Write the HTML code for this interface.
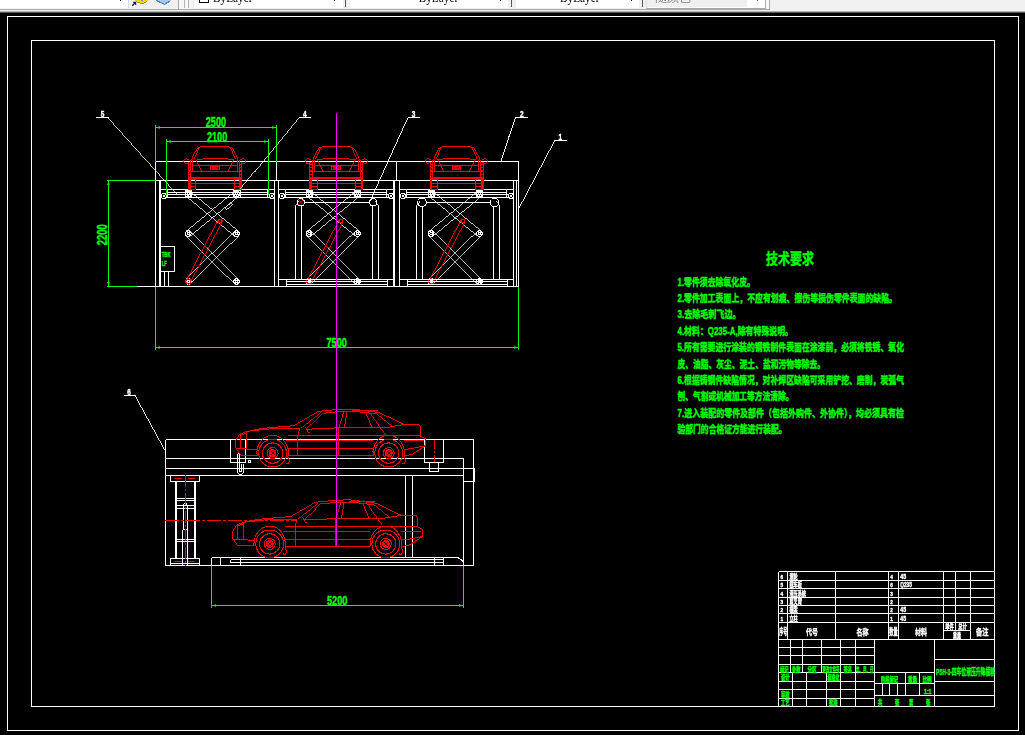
<!DOCTYPE html>
<html lang="zh"><head><meta charset="utf-8"><title>CAD</title>
<style>
html,body{margin:0;padding:0;background:#000;}
body{width:1025px;height:735px;position:relative;overflow:hidden;font-family:"Liberation Sans","Noto Sans CJK SC",sans-serif}
svg{position:absolute;left:0;top:0}
svg{stroke-width:1;shape-rendering:crispEdges;font-family:"Liberation Sans","Noto Sans CJK SC",sans-serif}
svg text{white-space:pre}
.aa{shape-rendering:geometricPrecision}
.w{filter:grayscale(1)}
</style></head>
<body>
<svg width="1025" height="735" viewBox="0 0 1025 735">
<rect x="0" y="0" width="1025" height="735" fill="#000" stroke="none"/>
<rect x="7.5" y="16.5" width="1011" height="714" stroke="#fff" fill="none"/>
<rect x="31.5" y="40.5" width="963" height="666" stroke="#fff" fill="none"/>
<line x1="155.5" y1="161.5" x2="518.5" y2="161.5" stroke="#fff"/>
<line x1="155.5" y1="180.5" x2="518.5" y2="180.5" stroke="#fff"/>
<line x1="155.5" y1="161.5" x2="155.5" y2="286.5" stroke="#fff"/>
<line x1="518.5" y1="161.5" x2="518.5" y2="286.5" stroke="#fff"/>
<line x1="137" y1="286.5" x2="518.5" y2="286.5" stroke="#fff"/>
<line x1="159.5" y1="180.5" x2="159.5" y2="286.5" stroke="#fff"/>
<line x1="160.5" y1="180.5" x2="160.5" y2="286.5" stroke="#fff"/>
<line x1="513.5" y1="180.5" x2="513.5" y2="286.5" stroke="#fff"/>
<line x1="516.5" y1="180.5" x2="516.5" y2="286.5" stroke="#fff"/>
<line x1="276.5" y1="161.5" x2="276.5" y2="180.5" stroke="#fff"/>
<line x1="396.5" y1="161.5" x2="396.5" y2="180.5" stroke="#fff"/>
<line x1="274.5" y1="180.5" x2="274.5" y2="286.5" stroke="#fff"/>
<line x1="278.5" y1="180.5" x2="278.5" y2="286.5" stroke="#fff"/>
<line x1="393.5" y1="180.5" x2="393.5" y2="286.5" stroke="#fff"/>
<line x1="394.5" y1="180.5" x2="394.5" y2="286.5" stroke="#fff"/>
<line x1="399.5" y1="180.5" x2="399.5" y2="286.5" stroke="#fff"/>
<line x1="160.5" y1="189.5" x2="274.5" y2="189.5" stroke="#fff"/>
<line x1="164.5" y1="197.5" x2="270.5" y2="197.5" stroke="#fff"/>
<line x1="167.5" y1="192.5" x2="267.5" y2="192.5" stroke="#fff"/>
<line x1="165.5" y1="194.5" x2="269.5" y2="194.5" stroke="#fff"/>
<circle cx="163.7" cy="196" r="2.5" stroke="#fff" fill="none"/>
<circle cx="163.7" cy="196" r="0.8" stroke="#fff" fill="none"/>
<circle cx="271.7" cy="196" r="2.5" stroke="#fff" fill="none"/>
<circle cx="271.7" cy="196" r="0.8" stroke="#fff" fill="none"/>
<line x1="167.5" y1="189.5" x2="167.5" y2="197.5" stroke="#fff"/>
<line x1="267.5" y1="189.5" x2="267.5" y2="197.5" stroke="#fff"/>
<line x1="278.5" y1="189.5" x2="393.5" y2="189.5" stroke="#fff"/>
<line x1="282.5" y1="197.5" x2="389.5" y2="197.5" stroke="#fff"/>
<line x1="285.5" y1="192.5" x2="386.5" y2="192.5" stroke="#fff"/>
<line x1="283.5" y1="194.5" x2="388.5" y2="194.5" stroke="#fff"/>
<circle cx="281.7" cy="196" r="2.5" stroke="#fff" fill="none"/>
<circle cx="281.7" cy="196" r="0.8" stroke="#fff" fill="none"/>
<circle cx="390.7" cy="196" r="2.5" stroke="#fff" fill="none"/>
<circle cx="390.7" cy="196" r="0.8" stroke="#fff" fill="none"/>
<line x1="285.5" y1="189.5" x2="285.5" y2="197.5" stroke="#fff"/>
<line x1="386.5" y1="189.5" x2="386.5" y2="197.5" stroke="#fff"/>
<line x1="399.5" y1="189.5" x2="513.5" y2="189.5" stroke="#fff"/>
<line x1="403.5" y1="197.5" x2="509.5" y2="197.5" stroke="#fff"/>
<line x1="406.5" y1="192.5" x2="506.5" y2="192.5" stroke="#fff"/>
<line x1="404.5" y1="194.5" x2="508.5" y2="194.5" stroke="#fff"/>
<circle cx="402.7" cy="196" r="2.5" stroke="#fff" fill="none"/>
<circle cx="402.7" cy="196" r="0.8" stroke="#fff" fill="none"/>
<circle cx="510.7" cy="196" r="2.5" stroke="#fff" fill="none"/>
<circle cx="510.7" cy="196" r="0.8" stroke="#fff" fill="none"/>
<line x1="406.5" y1="189.5" x2="406.5" y2="197.5" stroke="#fff"/>
<line x1="506.5" y1="189.5" x2="506.5" y2="197.5" stroke="#fff"/>
<line x1="186.3" y1="196.43" x2="234.5" y2="236.03" stroke="#fff" stroke-width="0.77"/>
<line x1="190.3" y1="191.57" x2="238.5" y2="231.17" stroke="#fff" stroke-width="0.77"/>
<line x1="234.5" y1="191.57" x2="186.3" y2="231.17" stroke="#fff" stroke-width="0.77"/>
<line x1="238.5" y1="196.43" x2="190.3" y2="236.03" stroke="#fff" stroke-width="0.77"/>
<line x1="186.08" y1="235.83" x2="234.28" y2="283.73" stroke="#fff" stroke-width="0.71"/>
<line x1="190.52" y1="231.37" x2="238.72" y2="279.27" stroke="#fff" stroke-width="0.71"/>
<line x1="234.28" y1="231.37" x2="186.08" y2="279.27" stroke="#fff" stroke-width="0.71"/>
<line x1="238.72" y1="235.83" x2="190.52" y2="283.73" stroke="#fff" stroke-width="0.71"/>
<circle cx="188.3" cy="194" r="2.8" stroke="#fff" fill="none"/>
<circle cx="188.3" cy="194" r="1.3" stroke="#fff" fill="none"/>
<circle cx="188.3" cy="233.6" r="2.8" stroke="#fff" fill="none"/>
<circle cx="188.3" cy="233.6" r="1.3" stroke="#fff" fill="none"/>
<circle cx="188.3" cy="281.5" r="2.8" stroke="#fff" fill="none"/>
<circle cx="188.3" cy="281.5" r="1.3" stroke="#fff" fill="none"/>
<circle cx="236.5" cy="194" r="2.8" stroke="#fff" fill="none"/>
<circle cx="236.5" cy="194" r="1.3" stroke="#fff" fill="none"/>
<circle cx="236.5" cy="233.6" r="2.8" stroke="#fff" fill="none"/>
<circle cx="236.5" cy="233.6" r="1.3" stroke="#fff" fill="none"/>
<circle cx="236.5" cy="281.5" r="2.8" stroke="#fff" fill="none"/>
<circle cx="236.5" cy="281.5" r="1.3" stroke="#fff" fill="none"/>
<rect x="185.3" y="190.5" width="6.5" height="7" stroke="#fff" fill="none"/>
<rect x="233.5" y="190.5" width="6.5" height="7" stroke="#fff" fill="none"/>
<line x1="224.9" y1="208" x2="230.9" y2="203" stroke="#fff" stroke-width="0.77"/>
<line x1="230.9" y1="203" x2="232.4" y2="204.8" stroke="#fff" stroke-width="0.77"/>
<line x1="232.4" y1="204.8" x2="226.4" y2="209.8" stroke="#fff" stroke-width="0.77"/>
<line x1="226.4" y1="209.8" x2="224.9" y2="208" stroke="#fff" stroke-width="0.77"/>
<line x1="218.15" y1="219.98" x2="186.35" y2="280.48" stroke="#f00" stroke-width="0.89"/>
<line x1="222.05" y1="222.02" x2="190.25" y2="282.52" stroke="#f00" stroke-width="0.89"/>
<circle cx="220.1" cy="221" r="2" stroke="#f00" fill="none"/>
<circle cx="188.3" cy="281.5" r="2.6" stroke="#f00" fill="none"/>
<line x1="204.48" y1="245.99" x2="208.37" y2="248.04" stroke="#f00" stroke-width="0.89"/>
<line x1="307.2" y1="196.43" x2="355.4" y2="236.03" stroke="#fff" stroke-width="0.77"/>
<line x1="311.2" y1="191.57" x2="359.4" y2="231.17" stroke="#fff" stroke-width="0.77"/>
<line x1="355.4" y1="191.57" x2="307.2" y2="231.17" stroke="#fff" stroke-width="0.77"/>
<line x1="359.4" y1="196.43" x2="311.2" y2="236.03" stroke="#fff" stroke-width="0.77"/>
<line x1="306.98" y1="235.83" x2="355.18" y2="283.73" stroke="#fff" stroke-width="0.71"/>
<line x1="311.42" y1="231.37" x2="359.62" y2="279.27" stroke="#fff" stroke-width="0.71"/>
<line x1="355.18" y1="231.37" x2="306.98" y2="279.27" stroke="#fff" stroke-width="0.71"/>
<line x1="359.62" y1="235.83" x2="311.42" y2="283.73" stroke="#fff" stroke-width="0.71"/>
<circle cx="309.2" cy="194" r="2.8" stroke="#fff" fill="none"/>
<circle cx="309.2" cy="194" r="1.3" stroke="#fff" fill="none"/>
<circle cx="309.2" cy="233.6" r="2.8" stroke="#fff" fill="none"/>
<circle cx="309.2" cy="233.6" r="1.3" stroke="#fff" fill="none"/>
<circle cx="309.2" cy="281.5" r="2.8" stroke="#fff" fill="none"/>
<circle cx="309.2" cy="281.5" r="1.3" stroke="#fff" fill="none"/>
<circle cx="357.4" cy="194" r="2.8" stroke="#fff" fill="none"/>
<circle cx="357.4" cy="194" r="1.3" stroke="#fff" fill="none"/>
<circle cx="357.4" cy="233.6" r="2.8" stroke="#fff" fill="none"/>
<circle cx="357.4" cy="233.6" r="1.3" stroke="#fff" fill="none"/>
<circle cx="357.4" cy="281.5" r="2.8" stroke="#fff" fill="none"/>
<circle cx="357.4" cy="281.5" r="1.3" stroke="#fff" fill="none"/>
<rect x="306.2" y="190.5" width="6.5" height="7" stroke="#fff" fill="none"/>
<rect x="354.4" y="190.5" width="6.5" height="7" stroke="#fff" fill="none"/>
<line x1="339.05" y1="219.98" x2="307.25" y2="280.48" stroke="#f00" stroke-width="0.89"/>
<line x1="342.95" y1="222.02" x2="311.15" y2="282.52" stroke="#f00" stroke-width="0.89"/>
<circle cx="341" cy="221" r="2" stroke="#f00" fill="none"/>
<circle cx="309.2" cy="281.5" r="2.6" stroke="#f00" fill="none"/>
<line x1="325.38" y1="245.99" x2="329.27" y2="248.04" stroke="#f00" stroke-width="0.89"/>
<line x1="429.2" y1="196.43" x2="477.4" y2="236.03" stroke="#fff" stroke-width="0.77"/>
<line x1="433.2" y1="191.57" x2="481.4" y2="231.17" stroke="#fff" stroke-width="0.77"/>
<line x1="477.4" y1="191.57" x2="429.2" y2="231.17" stroke="#fff" stroke-width="0.77"/>
<line x1="481.4" y1="196.43" x2="433.2" y2="236.03" stroke="#fff" stroke-width="0.77"/>
<line x1="428.98" y1="235.83" x2="477.18" y2="283.73" stroke="#fff" stroke-width="0.71"/>
<line x1="433.42" y1="231.37" x2="481.62" y2="279.27" stroke="#fff" stroke-width="0.71"/>
<line x1="477.18" y1="231.37" x2="428.98" y2="279.27" stroke="#fff" stroke-width="0.71"/>
<line x1="481.62" y1="235.83" x2="433.42" y2="283.73" stroke="#fff" stroke-width="0.71"/>
<circle cx="431.2" cy="194" r="2.8" stroke="#fff" fill="none"/>
<circle cx="431.2" cy="194" r="1.3" stroke="#fff" fill="none"/>
<circle cx="431.2" cy="233.6" r="2.8" stroke="#fff" fill="none"/>
<circle cx="431.2" cy="233.6" r="1.3" stroke="#fff" fill="none"/>
<circle cx="431.2" cy="281.5" r="2.8" stroke="#fff" fill="none"/>
<circle cx="431.2" cy="281.5" r="1.3" stroke="#fff" fill="none"/>
<circle cx="479.4" cy="194" r="2.8" stroke="#fff" fill="none"/>
<circle cx="479.4" cy="194" r="1.3" stroke="#fff" fill="none"/>
<circle cx="479.4" cy="233.6" r="2.8" stroke="#fff" fill="none"/>
<circle cx="479.4" cy="233.6" r="1.3" stroke="#fff" fill="none"/>
<circle cx="479.4" cy="281.5" r="2.8" stroke="#fff" fill="none"/>
<circle cx="479.4" cy="281.5" r="1.3" stroke="#fff" fill="none"/>
<rect x="428.2" y="190.5" width="6.5" height="7" stroke="#fff" fill="none"/>
<rect x="476.4" y="190.5" width="6.5" height="7" stroke="#fff" fill="none"/>
<line x1="461.05" y1="219.98" x2="429.25" y2="280.48" stroke="#f00" stroke-width="0.89"/>
<line x1="464.95" y1="222.02" x2="433.15" y2="282.52" stroke="#f00" stroke-width="0.89"/>
<circle cx="463" cy="221" r="2" stroke="#f00" fill="none"/>
<circle cx="431.2" cy="281.5" r="2.6" stroke="#f00" fill="none"/>
<line x1="447.38" y1="245.99" x2="451.27" y2="248.04" stroke="#f00" stroke-width="0.89"/>
<line x1="295.4" y1="279.5" x2="295.4" y2="206" stroke="#fff"/>
<line x1="295.4" y1="206" x2="298.9" y2="201" stroke="#fff" stroke-width="0.82"/>
<line x1="378.6" y1="279.5" x2="378.6" y2="206" stroke="#fff"/>
<line x1="378.6" y1="206" x2="375.1" y2="201" stroke="#fff" stroke-width="0.82"/>
<line x1="301.6" y1="206" x2="301.6" y2="279.5" stroke="#fff"/>
<line x1="372.4" y1="206" x2="372.4" y2="279.5" stroke="#fff"/>
<line x1="304.6" y1="202.5" x2="369.4" y2="202.5" stroke="#fff"/>
<circle cx="300.8" cy="202.3" r="3.6" stroke="#fff" fill="none"/>
<circle cx="373.2" cy="202.3" r="3.6" stroke="#fff" fill="none"/>
<line x1="297.8" y1="199.3" x2="303.8" y2="205.3" stroke="#f00" stroke-width="0.71"/>
<line x1="297.8" y1="205.3" x2="303.8" y2="199.3" stroke="#f00" stroke-width="0.71"/>
<line x1="416.6" y1="279.5" x2="416.6" y2="206" stroke="#fff"/>
<line x1="416.6" y1="206" x2="420.1" y2="201" stroke="#fff" stroke-width="0.82"/>
<line x1="499.8" y1="279.5" x2="499.8" y2="206" stroke="#fff"/>
<line x1="499.8" y1="206" x2="496.3" y2="201" stroke="#fff" stroke-width="0.82"/>
<line x1="422.8" y1="206" x2="422.8" y2="279.5" stroke="#fff"/>
<line x1="493.6" y1="206" x2="493.6" y2="279.5" stroke="#fff"/>
<line x1="425.8" y1="202.5" x2="490.6" y2="202.5" stroke="#fff"/>
<circle cx="422" cy="202.3" r="4.3" stroke="#fff" fill="none"/>
<circle cx="494.4" cy="202.3" r="4.3" stroke="#fff" fill="none"/>
<line x1="278.5" y1="279.5" x2="393.5" y2="279.5" stroke="#fff"/>
<line x1="286.5" y1="281.5" x2="387.5" y2="281.5" stroke="#fff"/>
<line x1="286.5" y1="284.5" x2="387.5" y2="284.5" stroke="#fff"/>
<line x1="286.5" y1="279.5" x2="286.5" y2="286.5" stroke="#fff"/>
<line x1="387.5" y1="279.5" x2="387.5" y2="286.5" stroke="#fff"/>
<line x1="399.5" y1="279.5" x2="513.5" y2="279.5" stroke="#fff"/>
<line x1="407.5" y1="281.5" x2="507.5" y2="281.5" stroke="#fff"/>
<line x1="407.5" y1="284.5" x2="507.5" y2="284.5" stroke="#fff"/>
<line x1="407.5" y1="279.5" x2="407.5" y2="286.5" stroke="#fff"/>
<line x1="507.5" y1="279.5" x2="507.5" y2="286.5" stroke="#fff"/>
<rect x="160.5" y="246.5" width="14" height="25" stroke="#fff" fill="none"/>
<line x1="164.5" y1="271.5" x2="164.5" y2="286.5" stroke="#fff"/>
<line x1="168.5" y1="271.5" x2="168.5" y2="286.5" stroke="#fff"/>
<text x="161.8" y="256.6" font-size="6.5" fill="#0f0" text-anchor="start" font-weight="bold" textLength="8.6" lengthAdjust="spacingAndGlyphs" style='stroke:#0f0;stroke-width:0.4;'>TBK</text>
<text x="161.8" y="265.6" font-size="6.5" fill="#0f0" text-anchor="start" font-weight="bold" textLength="5" lengthAdjust="spacingAndGlyphs" style='stroke:#0f0;stroke-width:0.4;'>LF</text>
<line x1="201.3" y1="146.5" x2="228.3" y2="146.5" stroke="#f00"/>
<line x1="228.3" y1="146.5" x2="232.3" y2="148.2" stroke="#f00" stroke-width="0.92"/>
<line x1="232.3" y1="148.2" x2="237.4" y2="157.5" stroke="#f00" stroke-width="0.88"/>
<line x1="237.4" y1="157.5" x2="239" y2="160.4" stroke="#f00" stroke-width="0.88"/>
<line x1="201.3" y1="146.5" x2="197.3" y2="148.2" stroke="#f00" stroke-width="0.92"/>
<line x1="197.3" y1="148.2" x2="192.2" y2="157.5" stroke="#f00" stroke-width="0.88"/>
<line x1="192.2" y1="157.5" x2="190.6" y2="160.4" stroke="#f00" stroke-width="0.88"/>
<line x1="230.6" y1="148.2" x2="235.2" y2="158.6" stroke="#f00" stroke-width="0.91"/>
<line x1="199" y1="148.2" x2="194.4" y2="158.6" stroke="#f00" stroke-width="0.91"/>
<line x1="195.5" y1="160" x2="204.8" y2="158.5" stroke="#f00" stroke-width="0.99"/>
<line x1="204.8" y1="158.5" x2="224.8" y2="158.5" stroke="#f00"/>
<line x1="224.8" y1="158.5" x2="234.1" y2="160" stroke="#f00" stroke-width="0.99"/>
<line x1="241.3" y1="161.5" x2="241.3" y2="189.5" stroke="#f00"/>
<line x1="188.3" y1="161.5" x2="188.3" y2="189.5" stroke="#f00"/>
<line x1="239" y1="160.4" x2="239" y2="178" stroke="#f00"/>
<line x1="190.6" y1="160.4" x2="190.6" y2="178" stroke="#f00"/>
<line x1="237" y1="160.4" x2="237" y2="172" stroke="#f00"/>
<line x1="192.6" y1="160.4" x2="192.6" y2="172" stroke="#f00"/>
<line x1="240.3" y1="160" x2="243.3" y2="158.5" stroke="#f00" stroke-width="0.89"/>
<line x1="243.3" y1="158.5" x2="246.3" y2="161" stroke="#f00" stroke-width="0.77"/>
<line x1="246.3" y1="161" x2="244.1" y2="163.6" stroke="#f00" stroke-width="0.76"/>
<line x1="244.1" y1="163.6" x2="240.6" y2="162.6" stroke="#f00" stroke-width="0.96"/>
<line x1="189.3" y1="160" x2="186.3" y2="158.5" stroke="#f00" stroke-width="0.89"/>
<line x1="186.3" y1="158.5" x2="183.3" y2="161" stroke="#f00" stroke-width="0.77"/>
<line x1="183.3" y1="161" x2="185.5" y2="163.6" stroke="#f00" stroke-width="0.76"/>
<line x1="185.5" y1="163.6" x2="189" y2="162.6" stroke="#f00" stroke-width="0.96"/>
<line x1="233.2" y1="160.4" x2="227.6" y2="171.5" stroke="#f00" stroke-width="0.89"/>
<line x1="196.4" y1="160.4" x2="202" y2="171.5" stroke="#f00" stroke-width="0.89"/>
<line x1="192.6" y1="165.5" x2="237" y2="165.5" stroke="#f00"/>
<line x1="188.3" y1="171.5" x2="241.3" y2="171.5" stroke="#f00"/>
<rect x="188.8" y="176.5" width="52" height="2.6" fill="#f00" stroke="none"/>
<line x1="195.5" y1="183.5" x2="234.1" y2="183.5" stroke="#f00"/>
<rect x="188.3" y="179" width="7.2" height="10.5" stroke="#f00" fill="none"/>
<line x1="188.3" y1="183.5" x2="195.5" y2="183.5" stroke="#f00"/>
<line x1="188.3" y1="186.5" x2="195.5" y2="186.5" stroke="#f00"/>
<line x1="188.3" y1="164.5" x2="190.6" y2="164.5" stroke="#f00"/>
<line x1="188.3" y1="167.5" x2="190.6" y2="167.5" stroke="#f00"/>
<line x1="188.3" y1="170.5" x2="190.6" y2="170.5" stroke="#f00"/>
<line x1="188.3" y1="174.5" x2="190.6" y2="174.5" stroke="#f00"/>
<rect x="188.3" y="178" width="2.3" height="11.5" fill="#f00" stroke="none"/>
<rect x="234.1" y="179" width="7.2" height="10.5" stroke="#f00" fill="none"/>
<line x1="234.1" y1="183.5" x2="241.3" y2="183.5" stroke="#f00"/>
<line x1="234.1" y1="186.5" x2="241.3" y2="186.5" stroke="#f00"/>
<line x1="239" y1="164.5" x2="241.3" y2="164.5" stroke="#f00"/>
<line x1="239" y1="167.5" x2="241.3" y2="167.5" stroke="#f00"/>
<line x1="239" y1="170.5" x2="241.3" y2="170.5" stroke="#f00"/>
<line x1="239" y1="174.5" x2="241.3" y2="174.5" stroke="#f00"/>
<rect x="239" y="178" width="2.3" height="11.5" fill="#f00" stroke="none"/>
<rect x="210.3" y="166" width="8.7" height="3.6" stroke="#f00" fill="none"/>
<text x="211.4" y="169.2" font-size="3.4" fill="#f00" text-anchor="start" font-weight="bold" textLength="6.4" lengthAdjust="spacingAndGlyphs" style='stroke:#f00;stroke-width:0.4;'>NO</text>
<line x1="322.8" y1="146.5" x2="349.8" y2="146.5" stroke="#f00"/>
<line x1="349.8" y1="146.5" x2="353.8" y2="148.2" stroke="#f00" stroke-width="0.92"/>
<line x1="353.8" y1="148.2" x2="358.9" y2="157.5" stroke="#f00" stroke-width="0.88"/>
<line x1="358.9" y1="157.5" x2="360.5" y2="160.4" stroke="#f00" stroke-width="0.88"/>
<line x1="322.8" y1="146.5" x2="318.8" y2="148.2" stroke="#f00" stroke-width="0.92"/>
<line x1="318.8" y1="148.2" x2="313.7" y2="157.5" stroke="#f00" stroke-width="0.88"/>
<line x1="313.7" y1="157.5" x2="312.1" y2="160.4" stroke="#f00" stroke-width="0.88"/>
<line x1="352.1" y1="148.2" x2="356.7" y2="158.6" stroke="#f00" stroke-width="0.91"/>
<line x1="320.5" y1="148.2" x2="315.9" y2="158.6" stroke="#f00" stroke-width="0.91"/>
<line x1="317" y1="160" x2="326.3" y2="158.5" stroke="#f00" stroke-width="0.99"/>
<line x1="326.3" y1="158.5" x2="346.3" y2="158.5" stroke="#f00"/>
<line x1="346.3" y1="158.5" x2="355.6" y2="160" stroke="#f00" stroke-width="0.99"/>
<line x1="362.8" y1="161.5" x2="362.8" y2="189.5" stroke="#f00"/>
<line x1="309.8" y1="161.5" x2="309.8" y2="189.5" stroke="#f00"/>
<line x1="360.5" y1="160.4" x2="360.5" y2="178" stroke="#f00"/>
<line x1="312.1" y1="160.4" x2="312.1" y2="178" stroke="#f00"/>
<line x1="358.5" y1="160.4" x2="358.5" y2="172" stroke="#f00"/>
<line x1="314.1" y1="160.4" x2="314.1" y2="172" stroke="#f00"/>
<line x1="361.8" y1="160" x2="364.8" y2="158.5" stroke="#f00" stroke-width="0.89"/>
<line x1="364.8" y1="158.5" x2="367.8" y2="161" stroke="#f00" stroke-width="0.77"/>
<line x1="367.8" y1="161" x2="365.6" y2="163.6" stroke="#f00" stroke-width="0.76"/>
<line x1="365.6" y1="163.6" x2="362.1" y2="162.6" stroke="#f00" stroke-width="0.96"/>
<line x1="310.8" y1="160" x2="307.8" y2="158.5" stroke="#f00" stroke-width="0.89"/>
<line x1="307.8" y1="158.5" x2="304.8" y2="161" stroke="#f00" stroke-width="0.77"/>
<line x1="304.8" y1="161" x2="307" y2="163.6" stroke="#f00" stroke-width="0.76"/>
<line x1="307" y1="163.6" x2="310.5" y2="162.6" stroke="#f00" stroke-width="0.96"/>
<line x1="354.7" y1="160.4" x2="349.1" y2="171.5" stroke="#f00" stroke-width="0.89"/>
<line x1="317.9" y1="160.4" x2="323.5" y2="171.5" stroke="#f00" stroke-width="0.89"/>
<line x1="314.1" y1="165.5" x2="358.5" y2="165.5" stroke="#f00"/>
<line x1="309.8" y1="171.5" x2="362.8" y2="171.5" stroke="#f00"/>
<rect x="310.3" y="176.5" width="52" height="2.6" fill="#f00" stroke="none"/>
<line x1="317" y1="183.5" x2="355.6" y2="183.5" stroke="#f00"/>
<rect x="309.8" y="179" width="7.2" height="10.5" stroke="#f00" fill="none"/>
<line x1="309.8" y1="183.5" x2="317" y2="183.5" stroke="#f00"/>
<line x1="309.8" y1="186.5" x2="317" y2="186.5" stroke="#f00"/>
<line x1="309.8" y1="164.5" x2="312.1" y2="164.5" stroke="#f00"/>
<line x1="309.8" y1="167.5" x2="312.1" y2="167.5" stroke="#f00"/>
<line x1="309.8" y1="170.5" x2="312.1" y2="170.5" stroke="#f00"/>
<line x1="309.8" y1="174.5" x2="312.1" y2="174.5" stroke="#f00"/>
<rect x="309.8" y="178" width="2.3" height="11.5" fill="#f00" stroke="none"/>
<rect x="355.6" y="179" width="7.2" height="10.5" stroke="#f00" fill="none"/>
<line x1="355.6" y1="183.5" x2="362.8" y2="183.5" stroke="#f00"/>
<line x1="355.6" y1="186.5" x2="362.8" y2="186.5" stroke="#f00"/>
<line x1="360.5" y1="164.5" x2="362.8" y2="164.5" stroke="#f00"/>
<line x1="360.5" y1="167.5" x2="362.8" y2="167.5" stroke="#f00"/>
<line x1="360.5" y1="170.5" x2="362.8" y2="170.5" stroke="#f00"/>
<line x1="360.5" y1="174.5" x2="362.8" y2="174.5" stroke="#f00"/>
<rect x="360.5" y="178" width="2.3" height="11.5" fill="#f00" stroke="none"/>
<rect x="331.8" y="166" width="8.7" height="3.6" stroke="#f00" fill="none"/>
<text x="332.9" y="169.2" font-size="3.4" fill="#f00" text-anchor="start" font-weight="bold" textLength="6.4" lengthAdjust="spacingAndGlyphs" style='stroke:#f00;stroke-width:0.4;'>NO</text>
<line x1="443.1" y1="146.5" x2="470.1" y2="146.5" stroke="#f00"/>
<line x1="470.1" y1="146.5" x2="474.1" y2="148.2" stroke="#f00" stroke-width="0.92"/>
<line x1="474.1" y1="148.2" x2="479.2" y2="157.5" stroke="#f00" stroke-width="0.88"/>
<line x1="479.2" y1="157.5" x2="480.8" y2="160.4" stroke="#f00" stroke-width="0.88"/>
<line x1="443.1" y1="146.5" x2="439.1" y2="148.2" stroke="#f00" stroke-width="0.92"/>
<line x1="439.1" y1="148.2" x2="434" y2="157.5" stroke="#f00" stroke-width="0.88"/>
<line x1="434" y1="157.5" x2="432.4" y2="160.4" stroke="#f00" stroke-width="0.88"/>
<line x1="472.4" y1="148.2" x2="477" y2="158.6" stroke="#f00" stroke-width="0.91"/>
<line x1="440.8" y1="148.2" x2="436.2" y2="158.6" stroke="#f00" stroke-width="0.91"/>
<line x1="437.3" y1="160" x2="446.6" y2="158.5" stroke="#f00" stroke-width="0.99"/>
<line x1="446.6" y1="158.5" x2="466.6" y2="158.5" stroke="#f00"/>
<line x1="466.6" y1="158.5" x2="475.9" y2="160" stroke="#f00" stroke-width="0.99"/>
<line x1="483.1" y1="161.5" x2="483.1" y2="189.5" stroke="#f00"/>
<line x1="430.1" y1="161.5" x2="430.1" y2="189.5" stroke="#f00"/>
<line x1="480.8" y1="160.4" x2="480.8" y2="178" stroke="#f00"/>
<line x1="432.4" y1="160.4" x2="432.4" y2="178" stroke="#f00"/>
<line x1="478.8" y1="160.4" x2="478.8" y2="172" stroke="#f00"/>
<line x1="434.4" y1="160.4" x2="434.4" y2="172" stroke="#f00"/>
<line x1="482.1" y1="160" x2="485.1" y2="158.5" stroke="#f00" stroke-width="0.89"/>
<line x1="485.1" y1="158.5" x2="488.1" y2="161" stroke="#f00" stroke-width="0.77"/>
<line x1="488.1" y1="161" x2="485.9" y2="163.6" stroke="#f00" stroke-width="0.76"/>
<line x1="485.9" y1="163.6" x2="482.4" y2="162.6" stroke="#f00" stroke-width="0.96"/>
<line x1="431.1" y1="160" x2="428.1" y2="158.5" stroke="#f00" stroke-width="0.89"/>
<line x1="428.1" y1="158.5" x2="425.1" y2="161" stroke="#f00" stroke-width="0.77"/>
<line x1="425.1" y1="161" x2="427.3" y2="163.6" stroke="#f00" stroke-width="0.76"/>
<line x1="427.3" y1="163.6" x2="430.8" y2="162.6" stroke="#f00" stroke-width="0.96"/>
<line x1="475" y1="160.4" x2="469.4" y2="171.5" stroke="#f00" stroke-width="0.89"/>
<line x1="438.2" y1="160.4" x2="443.8" y2="171.5" stroke="#f00" stroke-width="0.89"/>
<line x1="434.4" y1="165.5" x2="478.8" y2="165.5" stroke="#f00"/>
<line x1="430.1" y1="171.5" x2="483.1" y2="171.5" stroke="#f00"/>
<rect x="430.6" y="176.5" width="52" height="2.6" fill="#f00" stroke="none"/>
<line x1="437.3" y1="183.5" x2="475.9" y2="183.5" stroke="#f00"/>
<rect x="430.1" y="179" width="7.2" height="10.5" stroke="#f00" fill="none"/>
<line x1="430.1" y1="183.5" x2="437.3" y2="183.5" stroke="#f00"/>
<line x1="430.1" y1="186.5" x2="437.3" y2="186.5" stroke="#f00"/>
<line x1="430.1" y1="164.5" x2="432.4" y2="164.5" stroke="#f00"/>
<line x1="430.1" y1="167.5" x2="432.4" y2="167.5" stroke="#f00"/>
<line x1="430.1" y1="170.5" x2="432.4" y2="170.5" stroke="#f00"/>
<line x1="430.1" y1="174.5" x2="432.4" y2="174.5" stroke="#f00"/>
<rect x="430.1" y="178" width="2.3" height="11.5" fill="#f00" stroke="none"/>
<rect x="475.9" y="179" width="7.2" height="10.5" stroke="#f00" fill="none"/>
<line x1="475.9" y1="183.5" x2="483.1" y2="183.5" stroke="#f00"/>
<line x1="475.9" y1="186.5" x2="483.1" y2="186.5" stroke="#f00"/>
<line x1="480.8" y1="164.5" x2="483.1" y2="164.5" stroke="#f00"/>
<line x1="480.8" y1="167.5" x2="483.1" y2="167.5" stroke="#f00"/>
<line x1="480.8" y1="170.5" x2="483.1" y2="170.5" stroke="#f00"/>
<line x1="480.8" y1="174.5" x2="483.1" y2="174.5" stroke="#f00"/>
<rect x="480.8" y="178" width="2.3" height="11.5" fill="#f00" stroke="none"/>
<rect x="452.1" y="166" width="8.7" height="3.6" stroke="#f00" fill="none"/>
<text x="453.2" y="169.2" font-size="3.4" fill="#f00" text-anchor="start" font-weight="bold" textLength="6.4" lengthAdjust="spacingAndGlyphs" style='stroke:#f00;stroke-width:0.4;'>NO</text>
<line x1="155.5" y1="124.5" x2="155.5" y2="161.5" stroke="#0f0"/>
<line x1="276.5" y1="124.5" x2="276.5" y2="161.5" stroke="#0f0"/>
<line x1="155.5" y1="127.5" x2="276.5" y2="127.5" stroke="#0f0"/>
<polygon class="aa" points="155.5,127.5 160,126.2 160,128.8" fill="#0f0" stroke="none"/>
<polygon class="aa" points="276.5,127.5 272,126.2 272,128.8" fill="#0f0" stroke="none"/>
<line x1="166.5" y1="138.5" x2="166.5" y2="195" stroke="#0f0"/>
<line x1="268.5" y1="138.5" x2="268.5" y2="195" stroke="#0f0"/>
<line x1="166.5" y1="141.5" x2="268.5" y2="141.5" stroke="#0f0"/>
<polygon class="aa" points="166.5,141.5 171,140.2 171,142.8" fill="#0f0" stroke="none"/>
<polygon class="aa" points="268.5,141.5 264,140.2 264,142.8" fill="#0f0" stroke="none"/>
<line x1="155.5" y1="286.5" x2="155.5" y2="349.5" stroke="#0f0"/>
<line x1="518.5" y1="286.5" x2="518.5" y2="349.5" stroke="#0f0"/>
<line x1="155.5" y1="347.5" x2="518.5" y2="347.5" stroke="#0f0"/>
<polygon class="aa" points="155.5,347.5 160,346.2 160,348.8" fill="#0f0" stroke="none"/>
<polygon class="aa" points="518.5,347.5 514,346.2 514,348.8" fill="#0f0" stroke="none"/>
<line x1="106.5" y1="180.5" x2="155.5" y2="180.5" stroke="#0f0"/>
<line x1="106.5" y1="286.5" x2="137" y2="286.5" stroke="#0f0"/>
<line x1="108.5" y1="180.5" x2="108.5" y2="286.5" stroke="#0f0"/>
<polygon class="aa" points="108.5,180.5 107.2,185 109.8,185" fill="#0f0" stroke="none"/>
<polygon class="aa" points="108.5,286.5 107.2,282 109.8,282" fill="#0f0" stroke="none"/>
<text x="205.8" y="127" font-size="14" fill="#0f0" text-anchor="start" font-weight="bold" textLength="20.2" lengthAdjust="spacingAndGlyphs" style='font-family:"Liberation Sans", sans-serif;stroke:#0f0;stroke-width:0.4;'>2500</text>
<text x="207" y="142.4" font-size="14" fill="#0f0" text-anchor="start" font-weight="bold" textLength="20.2" lengthAdjust="spacingAndGlyphs" style='font-family:"Liberation Sans", sans-serif;stroke:#0f0;stroke-width:0.4;'>2100</text>
<text x="326.5" y="347" font-size="13" fill="#0f0" text-anchor="start" font-weight="bold" textLength="20.3" lengthAdjust="spacingAndGlyphs" style='font-family:"Liberation Sans", sans-serif;stroke:#0f0;stroke-width:0.4;'>7500</text>
<text x="0" y="0" font-size="14" fill="#0f0" text-anchor="start" font-weight="bold" textLength="21" lengthAdjust="spacingAndGlyphs" style='font-family:"Liberation Sans", sans-serif;stroke:#0f0;stroke-width:0.4;' transform="translate(107.2,245.2) rotate(-90)">2200</text>
<line x1="96" y1="117.5" x2="108.5" y2="117.5" stroke="#fff"/>
<line x1="108.5" y1="117.5" x2="178" y2="194.5" stroke="#fff" stroke-width="0.74"/>
<text x="102.5" y="116.7" font-size="8.5" fill="#fff" text-anchor="middle" font-weight="bold" textLength="3.6" lengthAdjust="spacingAndGlyphs" style='font-family:"Liberation Sans", sans-serif;stroke:#fff;stroke-width:0.4;' class="w">5</text>
<line x1="298.5" y1="117.5" x2="311" y2="117.5" stroke="#fff"/>
<line x1="298.5" y1="117.5" x2="240" y2="189" stroke="#fff" stroke-width="0.77"/>
<text x="304.7" y="116.7" font-size="8.5" fill="#fff" text-anchor="middle" font-weight="bold" textLength="3.6" lengthAdjust="spacingAndGlyphs" style='font-family:"Liberation Sans", sans-serif;stroke:#fff;stroke-width:0.4;' class="w">4</text>
<line x1="407.5" y1="117.5" x2="420" y2="117.5" stroke="#fff"/>
<line x1="407.5" y1="117.5" x2="371" y2="198" stroke="#fff" stroke-width="0.91"/>
<text x="413.5" y="116.7" font-size="8.5" fill="#fff" text-anchor="middle" font-weight="bold" textLength="3.6" lengthAdjust="spacingAndGlyphs" style='font-family:"Liberation Sans", sans-serif;stroke:#fff;stroke-width:0.4;' class="w">3</text>
<line x1="515" y1="117.5" x2="527.5" y2="117.5" stroke="#fff"/>
<line x1="515" y1="117.5" x2="501.2" y2="161" stroke="#fff" stroke-width="0.95"/>
<text x="521.7" y="116.7" font-size="8.5" fill="#fff" text-anchor="middle" font-weight="bold" textLength="3.6" lengthAdjust="spacingAndGlyphs" style='font-family:"Liberation Sans", sans-serif;stroke:#fff;stroke-width:0.4;' class="w">2</text>
<line x1="554.3" y1="140.5" x2="566.5" y2="140.5" stroke="#fff"/>
<line x1="554.3" y1="140.5" x2="518.5" y2="208" stroke="#fff" stroke-width="0.88"/>
<text x="560.4" y="139.7" font-size="8.5" fill="#fff" text-anchor="middle" font-weight="bold" textLength="3.6" lengthAdjust="spacingAndGlyphs" style='font-family:"Liberation Sans", sans-serif;stroke:#fff;stroke-width:0.4;' class="w">1</text>
<line x1="165.5" y1="439.5" x2="473.5" y2="439.5" stroke="#fff"/>
<line x1="165.5" y1="458.5" x2="463.5" y2="458.5" stroke="#fff"/>
<line x1="165.5" y1="468.5" x2="473.5" y2="468.5" stroke="#fff"/>
<line x1="165.5" y1="475.5" x2="463.5" y2="475.5" stroke="#fff"/>
<line x1="165.5" y1="439.5" x2="165.5" y2="565.5" stroke="#fff"/>
<line x1="473.5" y1="439.5" x2="473.5" y2="565.5" stroke="#fff"/>
<line x1="463.5" y1="458.5" x2="463.5" y2="565.5" stroke="#fff"/>
<line x1="165.5" y1="565.5" x2="211.5" y2="565.5" stroke="#fff"/>
<line x1="211.5" y1="565.5" x2="473.5" y2="565.5" stroke="#fff"/>
<rect x="463.5" y="468.5" width="10.5" height="13" stroke="#fff" fill="none"/>
<rect x="230.5" y="439.5" width="15" height="23" stroke="#fff" fill="none"/>
<path d="M237.5 453.5 V471 Q237.5 474.5 240.5 474.5 Q243.5 474.5 243.5 471 V464" stroke="#fff" fill="none"/>
<path d="M239.5 453.5 V470.5 Q239.7 472.5 241.5 471.5 V464" stroke="#fff" fill="none"/>
<line x1="237.5" y1="453.5" x2="239.5" y2="453.5" stroke="#fff"/>
<rect x="248.5" y="460.5" width="1.5" height="1.5" stroke="#fff" fill="none"/>
<rect x="424.5" y="439.5" width="19" height="23" stroke="#fff" fill="none"/>
<rect x="429.5" y="462.5" width="9" height="9" stroke="#fff" fill="none"/>
<line x1="434.5" y1="440" x2="434.5" y2="462" stroke="#f00" stroke-dasharray="9 2 2 2"/>
<rect x="170.5" y="475.5" width="29" height="6" stroke="#fff" fill="none"/>
<line x1="175" y1="478.5" x2="182" y2="478.5" stroke="#f00"/>
<line x1="188" y1="478.5" x2="195" y2="478.5" stroke="#f00"/>
<line x1="175.5" y1="481.5" x2="175.5" y2="558.5" stroke="#fff"/>
<line x1="195.5" y1="481.5" x2="195.5" y2="558.5" stroke="#fff"/>
<line x1="176.5" y1="481.5" x2="176.5" y2="558.5" stroke="#fff"/>
<line x1="194.5" y1="481.5" x2="194.5" y2="558.5" stroke="#fff"/>
<line x1="176.5" y1="498.5" x2="194.5" y2="498.5" stroke="#fff"/>
<line x1="176.5" y1="500.5" x2="194.5" y2="500.5" stroke="#fff"/>
<line x1="176.5" y1="505.5" x2="194.5" y2="505.5" stroke="#fff"/>
<line x1="176.5" y1="508.5" x2="194.5" y2="508.5" stroke="#fff"/>
<line x1="176.5" y1="539.5" x2="194.5" y2="539.5" stroke="#fff"/>
<line x1="176.5" y1="541.5" x2="194.5" y2="541.5" stroke="#fff"/>
<rect x="170.5" y="558.5" width="29" height="7" stroke="#fff" fill="none"/>
<line x1="175" y1="561.5" x2="182" y2="561.5" stroke="#f00"/>
<line x1="188" y1="561.5" x2="195" y2="561.5" stroke="#f00"/>
<line x1="170.5" y1="563.5" x2="199.5" y2="563.5" stroke="#fff"/>
<path d="M183.5 529.5 V505.5 Q183.5 503.5 185.2 503.5 Q187 503.5 187 505.5 V529.5" stroke="#fff" fill="none"/>
<line x1="182.5" y1="565.5" x2="182.5" y2="529.5" stroke="#fff"/>
<line x1="182.5" y1="529.5" x2="187.5" y2="529.5" stroke="#fff"/>
<line x1="187.5" y1="529.5" x2="187.5" y2="565.5" stroke="#fff"/>
<line x1="185.5" y1="475" x2="185.5" y2="565.5" stroke="#f00" stroke-dasharray="12 2 2 2"/>
<line x1="405.5" y1="475.5" x2="405.5" y2="557.5" stroke="#fff"/>
<line x1="412.5" y1="475.5" x2="412.5" y2="557.5" stroke="#fff"/>
<line x1="165" y1="520.5" x2="296" y2="520.5" stroke="#f00" stroke-dasharray="14 2 3 2"/>
<line x1="211.5" y1="557.5" x2="457.5" y2="557.5" stroke="#fff"/>
<path d="M457.5 557.5 L461 559.5 L463.5 562" stroke="#fff" fill="none"/>
<line x1="211.5" y1="557.5" x2="211.5" y2="565.5" stroke="#fff"/>
<line x1="220.5" y1="557.5" x2="220.5" y2="565.5" stroke="#fff"/>
<line x1="240.5" y1="557.5" x2="240.5" y2="565.5" stroke="#fff"/>
<line x1="230.5" y1="559.5" x2="443.5" y2="559.5" stroke="#fff"/>
<line x1="230.5" y1="562.5" x2="443.5" y2="562.5" stroke="#fff"/>
<line x1="230.5" y1="559.5" x2="230.5" y2="562.5" stroke="#fff"/>
<line x1="434.5" y1="557.5" x2="434.5" y2="565.5" stroke="#fff"/>
<line x1="443.5" y1="557.5" x2="443.5" y2="565.5" stroke="#fff"/>
<line x1="211.5" y1="565.5" x2="211.5" y2="608" stroke="#0f0"/>
<line x1="463.5" y1="565.5" x2="463.5" y2="608" stroke="#0f0"/>
<line x1="211.5" y1="605.5" x2="463.5" y2="605.5" stroke="#0f0"/>
<polygon class="aa" points="211.5,605.5 216,604.2 216,606.8" fill="#0f0" stroke="none"/>
<polygon class="aa" points="463.5,605.5 459,604.2 459,606.8" fill="#0f0" stroke="none"/>
<text x="327" y="605" font-size="13" fill="#0f0" text-anchor="start" font-weight="bold" textLength="20.5" lengthAdjust="spacingAndGlyphs" style='font-family:"Liberation Sans", sans-serif;stroke:#0f0;stroke-width:0.4;'>5200</text>
<line x1="123.5" y1="395.5" x2="135.5" y2="395.5" stroke="#fff"/>
<line x1="135.5" y1="395.5" x2="165" y2="449.5" stroke="#fff" stroke-width="0.88"/>
<text x="129" y="394.7" font-size="8.5" fill="#fff" text-anchor="middle" font-weight="bold" textLength="3.6" lengthAdjust="spacingAndGlyphs" style='font-family:"Liberation Sans", sans-serif;stroke:#fff;stroke-width:0.4;' class="w">6</text>
<g transform="translate(0,0)">
<circle cx="272.6" cy="453.1" r="13.9" stroke="#f00" fill="none"/>
<circle cx="272.6" cy="453.1" r="10.2" stroke="#f00" fill="none"/>
<circle cx="272.6" cy="453.1" r="5.5" stroke="#f00" fill="none"/>
<circle cx="272.6" cy="453.1" r="3.4" stroke="#f00" fill="#f00"/>
<line x1="270.6" y1="451.1" x2="274.6" y2="455.1" stroke="#000" stroke-width="0.71"/>
<line x1="270.6" y1="455.1" x2="274.6" y2="451.1" stroke="#000" stroke-width="0.71"/>
<path d="M257.06 455.6 A15.7 17.8 0 1 1 287.9 457.1" stroke="#f00" fill="none"/>
<path d="M287.9 457.1 q2.5 3 0.5 6.5 q-1.5 1 -2 -1" stroke="#f00" fill="none"/>
<circle cx="388.7" cy="453.1" r="13.9" stroke="#f00" fill="none"/>
<circle cx="388.7" cy="453.1" r="10.2" stroke="#f00" fill="none"/>
<circle cx="388.7" cy="453.1" r="5.5" stroke="#f00" fill="none"/>
<circle cx="388.7" cy="453.1" r="3.4" stroke="#f00" fill="#f00"/>
<line x1="386.7" y1="451.1" x2="390.7" y2="455.1" stroke="#000" stroke-width="0.71"/>
<line x1="386.7" y1="455.1" x2="390.7" y2="451.1" stroke="#000" stroke-width="0.71"/>
<path d="M373.16 455.6 A15.7 17.8 0 1 1 404 457.1" stroke="#f00" fill="none"/>
<path d="M404 457.1 q2.5 3 0.5 6.5 q-1.5 1 -2 -1" stroke="#f00" fill="none"/>
<line x1="257.3" y1="455" x2="240.5" y2="455" stroke="#f00"/>
<line x1="240.5" y1="455" x2="235.5" y2="447.6" stroke="#f00" stroke-width="0.83"/>
<line x1="235.5" y1="447.6" x2="235.5" y2="441.4" stroke="#f00"/>
<line x1="235.5" y1="441.4" x2="239" y2="434.6" stroke="#f00" stroke-width="0.89"/>
<line x1="239" y1="434.6" x2="244.6" y2="432.2" stroke="#f00" stroke-width="0.92"/>
<line x1="244.6" y1="432.2" x2="261" y2="428.5" stroke="#f00" stroke-width="0.98"/>
<line x1="261" y1="428.5" x2="293.8" y2="425.7" stroke="#f00" stroke-width="1"/>
<line x1="293.8" y1="425.7" x2="318.4" y2="411.4" stroke="#f00" stroke-width="0.86"/>
<line x1="318.4" y1="411.4" x2="338.9" y2="409.3" stroke="#f00" stroke-width="0.99"/>
<line x1="338.9" y1="409.3" x2="353.2" y2="409.1" stroke="#f00" stroke-width="1"/>
<line x1="353.2" y1="409.1" x2="379.2" y2="412.5" stroke="#f00" stroke-width="0.99"/>
<line x1="379.2" y1="412.5" x2="403.8" y2="424.4" stroke="#f00" stroke-width="0.9"/>
<line x1="403.8" y1="424.4" x2="418.8" y2="424.4" stroke="#f00"/>
<line x1="418.8" y1="424.4" x2="420.8" y2="427.8" stroke="#f00" stroke-width="0.86"/>
<line x1="420.8" y1="427.8" x2="420.2" y2="436" stroke="#f00" stroke-width="1"/>
<line x1="420.2" y1="436" x2="425.6" y2="438.7" stroke="#f00" stroke-width="0.89"/>
<line x1="425.6" y1="438.7" x2="425.6" y2="445.5" stroke="#f00"/>
<line x1="425.6" y1="445.5" x2="412" y2="454.4" stroke="#f00" stroke-width="0.84"/>
<line x1="412" y1="454.4" x2="404.3" y2="456" stroke="#f00" stroke-width="0.98"/>
<line x1="240.5" y1="435" x2="240.5" y2="448.6" stroke="#f00"/>
<line x1="246" y1="431.8" x2="246" y2="449" stroke="#f00"/>
<line x1="235.7" y1="448.3" x2="257" y2="449.6" stroke="#f00" stroke-width="1"/>
<line x1="239.5" y1="434.8" x2="246" y2="433.5" stroke="#f00" stroke-width="0.98"/>
<line x1="246" y1="431.4" x2="272" y2="428.7" stroke="#f00" stroke-width="0.99"/>
<line x1="272" y1="428.7" x2="300" y2="428.3" stroke="#f00" stroke-width="1"/>
<line x1="300" y1="428.3" x2="298" y2="434.6" stroke="#f00" stroke-width="0.95"/>
<line x1="297.9" y1="434.6" x2="297.9" y2="455.8" stroke="#f00"/>
<line x1="288.3" y1="435.5" x2="420.2" y2="435.5" stroke="#f00"/>
<line x1="288" y1="448.6" x2="373" y2="448.6" stroke="#f00"/>
<line x1="286" y1="440.6" x2="373" y2="440.6" stroke="#f00"/>
<line x1="404" y1="440.6" x2="424" y2="440.6" stroke="#f00"/>
<line x1="288" y1="455.8" x2="373.2" y2="455.8" stroke="#f00"/>
<line x1="404.5" y1="449.3" x2="412" y2="448.3" stroke="#f00" stroke-width="0.99"/>
<line x1="412" y1="448.3" x2="425.6" y2="445.8" stroke="#f00" stroke-width="0.98"/>
<line x1="425.6" y1="445.5" x2="420.2" y2="449.6" stroke="#f00" stroke-width="0.8"/>
<line x1="420.2" y1="449.6" x2="412" y2="454.4" stroke="#f00" stroke-width="0.86"/>
<line x1="300.6" y1="428.5" x2="321" y2="412.5" stroke="#f00" stroke-width="0.79"/>
<line x1="307.4" y1="427.8" x2="323.8" y2="412.8" stroke="#f00" stroke-width="0.74"/>
<line x1="305.5" y1="426.5" x2="308.5" y2="432.5" stroke="#f00" stroke-width="0.89"/>
<line x1="308.5" y1="432.5" x2="310" y2="432" stroke="#f00" stroke-width="0.95"/>
<line x1="323.8" y1="413.2" x2="338.9" y2="411.6" stroke="#f00" stroke-width="0.99"/>
<line x1="338.9" y1="411.6" x2="356.6" y2="411.6" stroke="#f00"/>
<line x1="356.6" y1="411.6" x2="377" y2="414" stroke="#f00" stroke-width="0.99"/>
<line x1="307.4" y1="429.2" x2="338.5" y2="427.8" stroke="#f00" stroke-width="1"/>
<line x1="338.5" y1="427.8" x2="386" y2="427.6" stroke="#f00" stroke-width="1"/>
<line x1="386" y1="427.6" x2="403.8" y2="424.6" stroke="#f00" stroke-width="0.99"/>
<line x1="343.7" y1="412" x2="338.9" y2="427.8" stroke="#f00" stroke-width="0.96"/>
<line x1="347" y1="412" x2="344.3" y2="427.8" stroke="#f00" stroke-width="0.99"/>
<line x1="338.2" y1="427.8" x2="338.2" y2="455.5" stroke="#f00"/>
<line x1="365.5" y1="412" x2="371.7" y2="427" stroke="#f00" stroke-width="0.92"/>
<line x1="370.3" y1="413.4" x2="385.3" y2="434.6" stroke="#f00" stroke-width="0.82"/>
<line x1="377.1" y1="414.1" x2="391.5" y2="425.7" stroke="#f00" stroke-width="0.78"/>
<line x1="379.2" y1="412.5" x2="403.8" y2="424.4" stroke="#f00" stroke-width="0.9"/>
<line x1="352" y1="410.6" x2="378" y2="410.6" stroke="#f00"/>
</g>
<g transform="translate(-2.9,90.8)">
<circle cx="272.6" cy="453.1" r="13.9" stroke="#f00" fill="none"/>
<circle cx="272.6" cy="453.1" r="10.2" stroke="#f00" fill="none"/>
<circle cx="272.6" cy="453.1" r="5.5" stroke="#f00" fill="none"/>
<circle cx="272.6" cy="453.1" r="3.4" stroke="#f00" fill="#f00"/>
<line x1="270.6" y1="451.1" x2="274.6" y2="455.1" stroke="#000" stroke-width="0.71"/>
<line x1="270.6" y1="455.1" x2="274.6" y2="451.1" stroke="#000" stroke-width="0.71"/>
<path d="M257.06 455.6 A15.7 17.8 0 1 1 287.9 457.1" stroke="#f00" fill="none"/>
<path d="M287.9 457.1 q2.5 3 0.5 6.5 q-1.5 1 -2 -1" stroke="#f00" fill="none"/>
<circle cx="388.7" cy="453.1" r="13.9" stroke="#f00" fill="none"/>
<circle cx="388.7" cy="453.1" r="10.2" stroke="#f00" fill="none"/>
<circle cx="388.7" cy="453.1" r="5.5" stroke="#f00" fill="none"/>
<circle cx="388.7" cy="453.1" r="3.4" stroke="#f00" fill="#f00"/>
<line x1="386.7" y1="451.1" x2="390.7" y2="455.1" stroke="#000" stroke-width="0.71"/>
<line x1="386.7" y1="455.1" x2="390.7" y2="451.1" stroke="#000" stroke-width="0.71"/>
<path d="M373.16 455.6 A15.7 17.8 0 1 1 404 457.1" stroke="#f00" fill="none"/>
<path d="M404 457.1 q2.5 3 0.5 6.5 q-1.5 1 -2 -1" stroke="#f00" fill="none"/>
<line x1="257.3" y1="455" x2="240.5" y2="455" stroke="#f00"/>
<line x1="240.5" y1="455" x2="235.5" y2="447.6" stroke="#f00" stroke-width="0.83"/>
<line x1="235.5" y1="447.6" x2="235.5" y2="441.4" stroke="#f00"/>
<line x1="235.5" y1="441.4" x2="239" y2="434.6" stroke="#f00" stroke-width="0.89"/>
<line x1="239" y1="434.6" x2="244.6" y2="432.2" stroke="#f00" stroke-width="0.92"/>
<line x1="244.6" y1="432.2" x2="261" y2="428.5" stroke="#f00" stroke-width="0.98"/>
<line x1="261" y1="428.5" x2="293.8" y2="425.7" stroke="#f00" stroke-width="1"/>
<line x1="293.8" y1="425.7" x2="318.4" y2="411.4" stroke="#f00" stroke-width="0.86"/>
<line x1="318.4" y1="411.4" x2="338.9" y2="409.3" stroke="#f00" stroke-width="0.99"/>
<line x1="338.9" y1="409.3" x2="353.2" y2="409.1" stroke="#f00" stroke-width="1"/>
<line x1="353.2" y1="409.1" x2="379.2" y2="412.5" stroke="#f00" stroke-width="0.99"/>
<line x1="379.2" y1="412.5" x2="403.8" y2="424.4" stroke="#f00" stroke-width="0.9"/>
<line x1="403.8" y1="424.4" x2="418.8" y2="424.4" stroke="#f00"/>
<line x1="418.8" y1="424.4" x2="420.8" y2="427.8" stroke="#f00" stroke-width="0.86"/>
<line x1="420.8" y1="427.8" x2="420.2" y2="436" stroke="#f00" stroke-width="1"/>
<line x1="420.2" y1="436" x2="425.6" y2="438.7" stroke="#f00" stroke-width="0.89"/>
<line x1="425.6" y1="438.7" x2="425.6" y2="445.5" stroke="#f00"/>
<line x1="425.6" y1="445.5" x2="412" y2="454.4" stroke="#f00" stroke-width="0.84"/>
<line x1="412" y1="454.4" x2="404.3" y2="456" stroke="#f00" stroke-width="0.98"/>
<line x1="240.5" y1="435" x2="240.5" y2="448.6" stroke="#f00"/>
<line x1="246" y1="431.8" x2="246" y2="449" stroke="#f00"/>
<line x1="235.7" y1="448.3" x2="257" y2="449.6" stroke="#f00" stroke-width="1"/>
<line x1="239.5" y1="434.8" x2="246" y2="433.5" stroke="#f00" stroke-width="0.98"/>
<line x1="246" y1="431.4" x2="272" y2="428.7" stroke="#f00" stroke-width="0.99"/>
<line x1="272" y1="428.7" x2="300" y2="428.3" stroke="#f00" stroke-width="1"/>
<line x1="300" y1="428.3" x2="298" y2="434.6" stroke="#f00" stroke-width="0.95"/>
<line x1="297.9" y1="434.6" x2="297.9" y2="455.8" stroke="#f00"/>
<line x1="288.3" y1="435.5" x2="420.2" y2="435.5" stroke="#f00"/>
<line x1="288" y1="448.6" x2="373" y2="448.6" stroke="#f00"/>
<line x1="286" y1="440.6" x2="373" y2="440.6" stroke="#f00"/>
<line x1="404" y1="440.6" x2="424" y2="440.6" stroke="#f00"/>
<line x1="288" y1="455.8" x2="373.2" y2="455.8" stroke="#f00"/>
<line x1="404.5" y1="449.3" x2="412" y2="448.3" stroke="#f00" stroke-width="0.99"/>
<line x1="412" y1="448.3" x2="425.6" y2="445.8" stroke="#f00" stroke-width="0.98"/>
<line x1="425.6" y1="445.5" x2="420.2" y2="449.6" stroke="#f00" stroke-width="0.8"/>
<line x1="420.2" y1="449.6" x2="412" y2="454.4" stroke="#f00" stroke-width="0.86"/>
<line x1="300.6" y1="428.5" x2="321" y2="412.5" stroke="#f00" stroke-width="0.79"/>
<line x1="307.4" y1="427.8" x2="323.8" y2="412.8" stroke="#f00" stroke-width="0.74"/>
<line x1="305.5" y1="426.5" x2="308.5" y2="432.5" stroke="#f00" stroke-width="0.89"/>
<line x1="308.5" y1="432.5" x2="310" y2="432" stroke="#f00" stroke-width="0.95"/>
<line x1="323.8" y1="413.2" x2="338.9" y2="411.6" stroke="#f00" stroke-width="0.99"/>
<line x1="338.9" y1="411.6" x2="356.6" y2="411.6" stroke="#f00"/>
<line x1="356.6" y1="411.6" x2="377" y2="414" stroke="#f00" stroke-width="0.99"/>
<line x1="307.4" y1="429.2" x2="338.5" y2="427.8" stroke="#f00" stroke-width="1"/>
<line x1="338.5" y1="427.8" x2="386" y2="427.6" stroke="#f00" stroke-width="1"/>
<line x1="386" y1="427.6" x2="403.8" y2="424.6" stroke="#f00" stroke-width="0.99"/>
<line x1="343.7" y1="412" x2="338.9" y2="427.8" stroke="#f00" stroke-width="0.96"/>
<line x1="347" y1="412" x2="344.3" y2="427.8" stroke="#f00" stroke-width="0.99"/>
<line x1="338.2" y1="427.8" x2="338.2" y2="455.5" stroke="#f00"/>
<line x1="365.5" y1="412" x2="371.7" y2="427" stroke="#f00" stroke-width="0.92"/>
<line x1="370.3" y1="413.4" x2="385.3" y2="434.6" stroke="#f00" stroke-width="0.82"/>
<line x1="377.1" y1="414.1" x2="391.5" y2="425.7" stroke="#f00" stroke-width="0.78"/>
<line x1="379.2" y1="412.5" x2="403.8" y2="424.4" stroke="#f00" stroke-width="0.9"/>
<line x1="352" y1="410.6" x2="378" y2="410.6" stroke="#f00"/>
</g>
<text x="766" y="264" font-size="14.5" fill="#0f0" text-anchor="start" font-weight="bold" textLength="48" lengthAdjust="spacingAndGlyphs" style='font-family:"Liberation Sans", "Noto Sans CJK SC", sans-serif;stroke:#0f0;stroke-width:0.4;'>技术要求</text>
<text x="677.5" y="285.6" font-size="10.5" fill="#0f0" text-anchor="start" font-weight="bold" textLength="77.5" lengthAdjust="spacingAndGlyphs" style='font-family:"Liberation Sans", "Noto Sans CJK SC", sans-serif;stroke:#0f0;stroke-width:0.4;'>1.零件须去除氧化皮。</text>
<text x="677.5" y="302" font-size="10.5" fill="#0f0" text-anchor="start" font-weight="bold" textLength="219.5" lengthAdjust="spacingAndGlyphs" style='font-family:"Liberation Sans", "Noto Sans CJK SC", sans-serif;stroke:#0f0;stroke-width:0.4;'>2.零件加工表面上，不应有划痕、擦伤等损伤零件表面的缺陷。</text>
<text x="677.5" y="318.4" font-size="10.5" fill="#0f0" text-anchor="start" font-weight="bold" textLength="63" lengthAdjust="spacingAndGlyphs" style='font-family:"Liberation Sans", "Noto Sans CJK SC", sans-serif;stroke:#0f0;stroke-width:0.4;'>3.去除毛刺飞边。</text>
<text x="677.5" y="334.8" font-size="10.5" fill="#0f0" text-anchor="start" font-weight="bold" textLength="115.5" lengthAdjust="spacingAndGlyphs" style='font-family:"Liberation Sans", "Noto Sans CJK SC", sans-serif;stroke:#0f0;stroke-width:0.4;'>4.材料：Q235-A,除有特殊说明。</text>
<text x="677.5" y="351.2" font-size="10.5" fill="#0f0" text-anchor="start" font-weight="bold" textLength="226.5" lengthAdjust="spacingAndGlyphs" style='font-family:"Liberation Sans", "Noto Sans CJK SC", sans-serif;stroke:#0f0;stroke-width:0.4;'>5.所有需要进行涂装的钢铁制件表面在涂漆前，必须将铁锈、氧化</text>
<text x="677.5" y="367.6" font-size="10.5" fill="#0f0" text-anchor="start" font-weight="bold" textLength="147.5" lengthAdjust="spacingAndGlyphs" style='font-family:"Liberation Sans", "Noto Sans CJK SC", sans-serif;stroke:#0f0;stroke-width:0.4;'>皮、油脂、灰尘、泥土、盐和污物等除去。</text>
<text x="677.5" y="384" font-size="10.5" fill="#0f0" text-anchor="start" font-weight="bold" textLength="226.5" lengthAdjust="spacingAndGlyphs" style='font-family:"Liberation Sans", "Noto Sans CJK SC", sans-serif;stroke:#0f0;stroke-width:0.4;'>6.根据铸钢件缺陷情况，对补焊区缺陷可采用铲挖、磨削，炭弧气</text>
<text x="677.5" y="400.4" font-size="10.5" fill="#0f0" text-anchor="start" font-weight="bold" textLength="116" lengthAdjust="spacingAndGlyphs" style='font-family:"Liberation Sans", "Noto Sans CJK SC", sans-serif;stroke:#0f0;stroke-width:0.4;'>刨、气割或机械加工等方法清除。</text>
<text x="677.5" y="416.8" font-size="10.5" fill="#0f0" text-anchor="start" font-weight="bold" textLength="226.5" lengthAdjust="spacingAndGlyphs" style='font-family:"Liberation Sans", "Noto Sans CJK SC", sans-serif;stroke:#0f0;stroke-width:0.4;'>7.进入装配的零件及部件（包括外购件、外协件），均必须具有检</text>
<text x="677.5" y="433.2" font-size="10.5" fill="#0f0" text-anchor="start" font-weight="bold" textLength="109" lengthAdjust="spacingAndGlyphs" style='font-family:"Liberation Sans", "Noto Sans CJK SC", sans-serif;stroke:#0f0;stroke-width:0.4;'>验部门的合格证方能进行装配。</text>
<line x1="778.5" y1="571.5" x2="994.5" y2="571.5" stroke="#fff"/>
<line x1="778.5" y1="580.5" x2="994.5" y2="580.5" stroke="#fff"/>
<line x1="778.5" y1="588.5" x2="994.5" y2="588.5" stroke="#fff"/>
<line x1="778.5" y1="597.5" x2="994.5" y2="597.5" stroke="#fff"/>
<line x1="778.5" y1="605.5" x2="994.5" y2="605.5" stroke="#fff"/>
<line x1="778.5" y1="613.5" x2="994.5" y2="613.5" stroke="#fff"/>
<line x1="778.5" y1="622.5" x2="994.5" y2="622.5" stroke="#fff"/>
<line x1="778.5" y1="639.5" x2="994.5" y2="639.5" stroke="#fff"/>
<line x1="778.5" y1="571.5" x2="778.5" y2="639.5" stroke="#fff"/>
<line x1="787.5" y1="571.5" x2="787.5" y2="639.5" stroke="#fff"/>
<line x1="835.5" y1="571.5" x2="835.5" y2="639.5" stroke="#fff"/>
<line x1="888.5" y1="571.5" x2="888.5" y2="639.5" stroke="#fff"/>
<line x1="898.5" y1="571.5" x2="898.5" y2="639.5" stroke="#fff"/>
<line x1="943.5" y1="571.5" x2="943.5" y2="639.5" stroke="#fff"/>
<line x1="970.5" y1="571.5" x2="970.5" y2="639.5" stroke="#fff"/>
<line x1="955.5" y1="571.5" x2="955.5" y2="630.5" stroke="#fff"/>
<line x1="943.5" y1="630.5" x2="970.5" y2="630.5" stroke="#fff"/>
<line x1="778.5" y1="639.5" x2="778.5" y2="706.5" stroke="#fff"/>
<text x="780.5" y="620.9" font-size="6" fill="#fff" text-anchor="start" font-weight="bold" textLength="2.6" lengthAdjust="spacingAndGlyphs" style='font-family:"Liberation Sans", "Noto Sans CJK SC", sans-serif;stroke:#fff;stroke-width:0.4;' class="w">1</text>
<text x="789.5" y="620.9" font-size="6.5" fill="#fff" text-anchor="start" font-weight="bold" textLength="8.2" lengthAdjust="spacingAndGlyphs" style='font-family:"Liberation Sans", "Noto Sans CJK SC", sans-serif;stroke:#fff;stroke-width:0.4;' class="w">立柱</text>
<text x="890.3" y="620.9" font-size="6" fill="#fff" text-anchor="start" font-weight="bold" textLength="2.6" lengthAdjust="spacingAndGlyphs" style='font-family:"Liberation Sans", "Noto Sans CJK SC", sans-serif;stroke:#fff;stroke-width:0.4;' class="w">1</text>
<text x="900.3" y="620.9" font-size="6.5" fill="#fff" text-anchor="start" font-weight="bold" textLength="5.8" lengthAdjust="spacingAndGlyphs" style='font-family:"Liberation Sans", "Noto Sans CJK SC", sans-serif;stroke:#fff;stroke-width:0.4;' class="w">45</text>
<text x="780.5" y="611.9" font-size="6" fill="#fff" text-anchor="start" font-weight="bold" textLength="2.6" lengthAdjust="spacingAndGlyphs" style='font-family:"Liberation Sans", "Noto Sans CJK SC", sans-serif;stroke:#fff;stroke-width:0.4;' class="w">2</text>
<text x="789.5" y="611.9" font-size="6.5" fill="#fff" text-anchor="start" font-weight="bold" textLength="8.2" lengthAdjust="spacingAndGlyphs" style='font-family:"Liberation Sans", "Noto Sans CJK SC", sans-serif;stroke:#fff;stroke-width:0.4;' class="w">横梁</text>
<text x="890.3" y="611.9" font-size="6" fill="#fff" text-anchor="start" font-weight="bold" textLength="2.6" lengthAdjust="spacingAndGlyphs" style='font-family:"Liberation Sans", "Noto Sans CJK SC", sans-serif;stroke:#fff;stroke-width:0.4;' class="w">2</text>
<text x="900.3" y="611.9" font-size="6.5" fill="#fff" text-anchor="start" font-weight="bold" textLength="5.8" lengthAdjust="spacingAndGlyphs" style='font-family:"Liberation Sans", "Noto Sans CJK SC", sans-serif;stroke:#fff;stroke-width:0.4;' class="w">45</text>
<text x="780.5" y="603.9" font-size="6" fill="#fff" text-anchor="start" font-weight="bold" textLength="2.6" lengthAdjust="spacingAndGlyphs" style='font-family:"Liberation Sans", "Noto Sans CJK SC", sans-serif;stroke:#fff;stroke-width:0.4;' class="w">3</text>
<text x="789.5" y="603.9" font-size="6.5" fill="#fff" text-anchor="start" font-weight="bold" textLength="12.3" lengthAdjust="spacingAndGlyphs" style='font-family:"Liberation Sans", "Noto Sans CJK SC", sans-serif;stroke:#fff;stroke-width:0.4;' class="w">剪叉臂</text>
<text x="890.3" y="603.9" font-size="6" fill="#fff" text-anchor="start" font-weight="bold" textLength="2.6" lengthAdjust="spacingAndGlyphs" style='font-family:"Liberation Sans", "Noto Sans CJK SC", sans-serif;stroke:#fff;stroke-width:0.4;' class="w">2</text>
<text x="780.5" y="595.9" font-size="6" fill="#fff" text-anchor="start" font-weight="bold" textLength="2.6" lengthAdjust="spacingAndGlyphs" style='font-family:"Liberation Sans", "Noto Sans CJK SC", sans-serif;stroke:#fff;stroke-width:0.4;' class="w">4</text>
<text x="789.5" y="595.9" font-size="6.5" fill="#fff" text-anchor="start" font-weight="bold" textLength="16.4" lengthAdjust="spacingAndGlyphs" style='font-family:"Liberation Sans", "Noto Sans CJK SC", sans-serif;stroke:#fff;stroke-width:0.4;' class="w">液压系统</text>
<text x="890.3" y="595.9" font-size="6" fill="#fff" text-anchor="start" font-weight="bold" textLength="2.6" lengthAdjust="spacingAndGlyphs" style='font-family:"Liberation Sans", "Noto Sans CJK SC", sans-serif;stroke:#fff;stroke-width:0.4;' class="w">3</text>
<text x="780.5" y="586.9" font-size="6" fill="#fff" text-anchor="start" font-weight="bold" textLength="2.6" lengthAdjust="spacingAndGlyphs" style='font-family:"Liberation Sans", "Noto Sans CJK SC", sans-serif;stroke:#fff;stroke-width:0.4;' class="w">5</text>
<text x="789.5" y="586.9" font-size="6.5" fill="#fff" text-anchor="start" font-weight="bold" textLength="12.3" lengthAdjust="spacingAndGlyphs" style='font-family:"Liberation Sans", "Noto Sans CJK SC", sans-serif;stroke:#fff;stroke-width:0.4;' class="w">载车板</text>
<text x="890.3" y="586.9" font-size="6" fill="#fff" text-anchor="start" font-weight="bold" textLength="2.6" lengthAdjust="spacingAndGlyphs" style='font-family:"Liberation Sans", "Noto Sans CJK SC", sans-serif;stroke:#fff;stroke-width:0.4;' class="w">6</text>
<text x="900.3" y="586.9" font-size="6.5" fill="#fff" text-anchor="start" font-weight="bold" textLength="11.6" lengthAdjust="spacingAndGlyphs" style='font-family:"Liberation Sans", "Noto Sans CJK SC", sans-serif;stroke:#fff;stroke-width:0.4;' class="w">Q235</text>
<text x="780.5" y="578.9" font-size="6" fill="#fff" text-anchor="start" font-weight="bold" textLength="2.6" lengthAdjust="spacingAndGlyphs" style='font-family:"Liberation Sans", "Noto Sans CJK SC", sans-serif;stroke:#fff;stroke-width:0.4;' class="w">6</text>
<text x="789.5" y="578.9" font-size="6.5" fill="#fff" text-anchor="start" font-weight="bold" textLength="8.2" lengthAdjust="spacingAndGlyphs" style='font-family:"Liberation Sans", "Noto Sans CJK SC", sans-serif;stroke:#fff;stroke-width:0.4;' class="w">滚轮</text>
<text x="890.3" y="578.9" font-size="6" fill="#fff" text-anchor="start" font-weight="bold" textLength="2.6" lengthAdjust="spacingAndGlyphs" style='font-family:"Liberation Sans", "Noto Sans CJK SC", sans-serif;stroke:#fff;stroke-width:0.4;' class="w">4</text>
<text x="900.3" y="578.9" font-size="6.5" fill="#fff" text-anchor="start" font-weight="bold" textLength="5.8" lengthAdjust="spacingAndGlyphs" style='font-family:"Liberation Sans", "Noto Sans CJK SC", sans-serif;stroke:#fff;stroke-width:0.4;' class="w">45</text>
<text x="779.3" y="634.5" font-size="9" fill="#fff" text-anchor="start" font-weight="bold" textLength="8" lengthAdjust="spacingAndGlyphs" style='font-family:"Liberation Sans", "Noto Sans CJK SC", sans-serif;stroke:#fff;stroke-width:0.4;' class="w">序号</text>
<text x="806" y="634.5" font-size="8.5" fill="#fff" text-anchor="start" font-weight="bold" textLength="12" lengthAdjust="spacingAndGlyphs" style='font-family:"Liberation Sans", "Noto Sans CJK SC", sans-serif;stroke:#fff;stroke-width:0.4;' class="w">代号</text>
<text x="856.5" y="634.5" font-size="8.5" fill="#fff" text-anchor="start" font-weight="bold" textLength="12" lengthAdjust="spacingAndGlyphs" style='font-family:"Liberation Sans", "Noto Sans CJK SC", sans-serif;stroke:#fff;stroke-width:0.4;' class="w">名称</text>
<text x="889.3" y="634.5" font-size="9" fill="#fff" text-anchor="start" font-weight="bold" textLength="8.4" lengthAdjust="spacingAndGlyphs" style='font-family:"Liberation Sans", "Noto Sans CJK SC", sans-serif;stroke:#fff;stroke-width:0.4;' class="w">数量</text>
<text x="915" y="634.5" font-size="8.5" fill="#fff" text-anchor="start" font-weight="bold" textLength="12" lengthAdjust="spacingAndGlyphs" style='font-family:"Liberation Sans", "Noto Sans CJK SC", sans-serif;stroke:#fff;stroke-width:0.4;' class="w">材料</text>
<text x="945.3" y="629.2" font-size="6.5" fill="#fff" text-anchor="start" font-weight="bold" textLength="8.4" lengthAdjust="spacingAndGlyphs" style='font-family:"Liberation Sans", "Noto Sans CJK SC", sans-serif;stroke:#fff;stroke-width:0.4;' class="w">单件</text>
<text x="958.3" y="629.2" font-size="6.5" fill="#fff" text-anchor="start" font-weight="bold" textLength="8.4" lengthAdjust="spacingAndGlyphs" style='font-family:"Liberation Sans", "Noto Sans CJK SC", sans-serif;stroke:#fff;stroke-width:0.4;' class="w">总计</text>
<text x="953" y="638" font-size="6.5" fill="#fff" text-anchor="start" font-weight="bold" textLength="8" lengthAdjust="spacingAndGlyphs" style='font-family:"Liberation Sans", "Noto Sans CJK SC", sans-serif;stroke:#fff;stroke-width:0.4;' class="w">重量</text>
<text x="976" y="634.5" font-size="8.5" fill="#fff" text-anchor="start" font-weight="bold" textLength="12.5" lengthAdjust="spacingAndGlyphs" style='font-family:"Liberation Sans", "Noto Sans CJK SC", sans-serif;stroke:#fff;stroke-width:0.4;' class="w">备注</text>
<line x1="778.5" y1="647.5" x2="874.5" y2="647.5" stroke="#fff"/>
<line x1="778.5" y1="655.5" x2="874.5" y2="655.5" stroke="#fff"/>
<line x1="778.5" y1="664.5" x2="874.5" y2="664.5" stroke="#fff"/>
<line x1="778.5" y1="672.5" x2="874.5" y2="672.5" stroke="#fff"/>
<line x1="778.5" y1="681.5" x2="874.5" y2="681.5" stroke="#fff"/>
<line x1="778.5" y1="689.5" x2="874.5" y2="689.5" stroke="#fff"/>
<line x1="778.5" y1="698.5" x2="874.5" y2="698.5" stroke="#fff"/>
<line x1="790.5" y1="639.5" x2="790.5" y2="672.5" stroke="#fff"/>
<line x1="802.5" y1="639.5" x2="802.5" y2="672.5" stroke="#fff"/>
<line x1="821.5" y1="639.5" x2="821.5" y2="672.5" stroke="#fff"/>
<line x1="792.5" y1="672.5" x2="792.5" y2="706.5" stroke="#fff"/>
<line x1="806.5" y1="672.5" x2="806.5" y2="706.5" stroke="#fff"/>
<line x1="826.5" y1="672.5" x2="826.5" y2="706.5" stroke="#fff"/>
<line x1="840.5" y1="639.5" x2="840.5" y2="706.5" stroke="#fff"/>
<line x1="855.5" y1="639.5" x2="855.5" y2="706.5" stroke="#fff"/>
<line x1="874.5" y1="639.5" x2="874.5" y2="706.5" stroke="#fff"/>
<text x="780" y="671.6" font-size="6.5" fill="#0f0" text-anchor="start" font-weight="bold" textLength="8.5" lengthAdjust="spacingAndGlyphs" style='font-family:"Liberation Sans", "Noto Sans CJK SC", sans-serif;stroke:#0f0;stroke-width:0.4;'>标记</text>
<text x="792" y="671.6" font-size="6.5" fill="#0f0" text-anchor="start" font-weight="bold" textLength="8.5" lengthAdjust="spacingAndGlyphs" style='font-family:"Liberation Sans", "Noto Sans CJK SC", sans-serif;stroke:#0f0;stroke-width:0.4;'>处数</text>
<text x="807.5" y="671.6" font-size="6.5" fill="#0f0" text-anchor="start" font-weight="bold" textLength="9" lengthAdjust="spacingAndGlyphs" style='font-family:"Liberation Sans", "Noto Sans CJK SC", sans-serif;stroke:#0f0;stroke-width:0.4;'>分区</text>
<text x="822.5" y="671.6" font-size="6.5" fill="#0f0" text-anchor="start" font-weight="bold" textLength="17" lengthAdjust="spacingAndGlyphs" style='font-family:"Liberation Sans", "Noto Sans CJK SC", sans-serif;stroke:#0f0;stroke-width:0.4;'>更改文件号</text>
<text x="843.5" y="671.6" font-size="6.5" fill="#0f0" text-anchor="start" font-weight="bold" textLength="8.5" lengthAdjust="spacingAndGlyphs" style='font-family:"Liberation Sans", "Noto Sans CJK SC", sans-serif;stroke:#0f0;stroke-width:0.4;'>签名</text>
<text x="856" y="671.6" font-size="6.5" fill="#0f0" text-anchor="start" font-weight="bold" textLength="17.5" lengthAdjust="spacingAndGlyphs" style='font-family:"Liberation Sans", "Noto Sans CJK SC", sans-serif;stroke:#0f0;stroke-width:0.4;'>年、月、日</text>
<text x="781" y="680.4" font-size="6.5" fill="#0f0" text-anchor="start" font-weight="bold" textLength="8.5" lengthAdjust="spacingAndGlyphs" style='font-family:"Liberation Sans", "Noto Sans CJK SC", sans-serif;stroke:#0f0;stroke-width:0.4;'>设计</text>
<text x="827.5" y="680.2" font-size="6.5" fill="#0f0" text-anchor="start" font-weight="bold" textLength="12" lengthAdjust="spacingAndGlyphs" style='font-family:"Liberation Sans", "Noto Sans CJK SC", sans-serif;stroke:#0f0;stroke-width:0.4;'>标准化</text>
<text x="781" y="697.4" font-size="6.5" fill="#0f0" text-anchor="start" font-weight="bold" textLength="8.5" lengthAdjust="spacingAndGlyphs" style='font-family:"Liberation Sans", "Noto Sans CJK SC", sans-serif;stroke:#0f0;stroke-width:0.4;'>审核</text>
<text x="781" y="705.4" font-size="6.5" fill="#0f0" text-anchor="start" font-weight="bold" textLength="8.5" lengthAdjust="spacingAndGlyphs" style='font-family:"Liberation Sans", "Noto Sans CJK SC", sans-serif;stroke:#0f0;stroke-width:0.4;'>工艺</text>
<text x="829" y="705.4" font-size="6.5" fill="#0f0" text-anchor="start" font-weight="bold" textLength="8.5" lengthAdjust="spacingAndGlyphs" style='font-family:"Liberation Sans", "Noto Sans CJK SC", sans-serif;stroke:#0f0;stroke-width:0.4;'>批准</text>
<line x1="934.5" y1="639.5" x2="934.5" y2="706.5" stroke="#fff"/>
<line x1="874.5" y1="672.5" x2="934.5" y2="672.5" stroke="#fff"/>
<line x1="874.5" y1="683.5" x2="934.5" y2="683.5" stroke="#fff"/>
<line x1="874.5" y1="695.5" x2="994.5" y2="695.5" stroke="#fff"/>
<line x1="905.5" y1="672.5" x2="905.5" y2="695.5" stroke="#fff"/>
<line x1="919.5" y1="672.5" x2="919.5" y2="695.5" stroke="#fff"/>
<line x1="882.5" y1="683.5" x2="882.5" y2="695.5" stroke="#fff"/>
<line x1="889.5" y1="683.5" x2="889.5" y2="695.5" stroke="#fff"/>
<line x1="897.5" y1="683.5" x2="897.5" y2="695.5" stroke="#fff"/>
<text x="881" y="682.4" font-size="6.5" fill="#0f0" text-anchor="start" font-weight="bold" textLength="17" lengthAdjust="spacingAndGlyphs" style='font-family:"Liberation Sans", "Noto Sans CJK SC", sans-serif;stroke:#0f0;stroke-width:0.4;'>阶段标记</text>
<text x="908" y="682.4" font-size="6.5" fill="#0f0" text-anchor="start" font-weight="bold" textLength="9" lengthAdjust="spacingAndGlyphs" style='font-family:"Liberation Sans", "Noto Sans CJK SC", sans-serif;stroke:#0f0;stroke-width:0.4;'>重量</text>
<text x="922.5" y="682.4" font-size="6.5" fill="#0f0" text-anchor="start" font-weight="bold" textLength="9" lengthAdjust="spacingAndGlyphs" style='font-family:"Liberation Sans", "Noto Sans CJK SC", sans-serif;stroke:#0f0;stroke-width:0.4;'>比例</text>
<text x="924" y="694.2" font-size="6.5" fill="#0f0" text-anchor="start" font-weight="bold" textLength="7.5" lengthAdjust="spacingAndGlyphs" style='font-family:"Liberation Sans", "Noto Sans CJK SC", sans-serif;stroke:#0f0;stroke-width:0.4;'>1:1</text>
<text x="878" y="704.8" font-size="6.5" fill="#0f0" text-anchor="start" font-weight="bold" textLength="4.2" lengthAdjust="spacingAndGlyphs" style='font-family:"Liberation Sans", "Noto Sans CJK SC", sans-serif;stroke:#0f0;stroke-width:0.4;'>共</text>
<text x="895" y="704.8" font-size="6.5" fill="#0f0" text-anchor="start" font-weight="bold" textLength="4.2" lengthAdjust="spacingAndGlyphs" style='font-family:"Liberation Sans", "Noto Sans CJK SC", sans-serif;stroke:#0f0;stroke-width:0.4;'>张</text>
<text x="909" y="704.8" font-size="6.5" fill="#0f0" text-anchor="start" font-weight="bold" textLength="4.2" lengthAdjust="spacingAndGlyphs" style='font-family:"Liberation Sans", "Noto Sans CJK SC", sans-serif;stroke:#0f0;stroke-width:0.4;'>第</text>
<text x="926" y="704.8" font-size="6.5" fill="#0f0" text-anchor="start" font-weight="bold" textLength="4.2" lengthAdjust="spacingAndGlyphs" style='font-family:"Liberation Sans", "Noto Sans CJK SC", sans-serif;stroke:#0f0;stroke-width:0.4;'>张</text>
<line x1="934.5" y1="659.5" x2="994.5" y2="659.5" stroke="#fff"/>
<line x1="934.5" y1="681.5" x2="994.5" y2="681.5" stroke="#fff"/>
<text x="936" y="675.2" font-size="9" fill="#0f0" text-anchor="start" font-weight="bold" textLength="59" lengthAdjust="spacingAndGlyphs" style='font-family:"Liberation Sans", "Noto Sans CJK SC", sans-serif;stroke:#0f0;stroke-width:0.4;'>PSH-3-四车位液压升降横移</text>
<line x1="336.5" y1="113" x2="336.5" y2="546" stroke="#f0f"/>
<g id="tb" opacity="0.999"><rect x="0" y="0" width="1025" height="10" fill="#f0f0f0" stroke="none"/>
<rect x="0" y="0" width="128" height="8" fill="#fff" stroke="none"/>
<rect x="128" y="0" width="1" height="8" fill="#d4dae4" stroke="none"/>
<rect x="120" y="0" width="1.4" height="1" fill="#000" stroke="none"/>
<polygon points="134.2,0 148.2,0 146,1.6 142.4,3.9 141.2,3.9 137,1.6" fill="#ecd90a" stroke="none"/>
<polyline points="136.2,1.4 141.8,4.1 147,1.4" fill="none" stroke="#a89400" stroke-width="0.9"/>
<rect x="141" y="0" width="1.6" height="1" fill="#6f9ad8" stroke="none"/>
<path class="aa" d="M132.2 5.8 L135 3" stroke="#0a1f66" stroke-width="1.3" fill="none"/>
<polygon class="aa" points="132.6,1.8 136.2,1.8 136.2,5.4" fill="#0a1f66" stroke="none"/>
<polygon points="155.5,0 171.2,0 165.6,4.6 163.4,4.6" fill="#a9c7e6" stroke="none"/>
<polyline points="156.5,0.5 164.3,4.3 170.6,0.8" fill="none" stroke="#5f86b3" stroke-width="1"/>
<rect x="178" y="0" width="1" height="9" fill="#a6a6a6" stroke="none"/>
<rect x="179" y="0" width="14" height="9" fill="#f6f6f6" stroke="none"/>
<rect x="184" y="0" width="1" height="8" fill="#b4b4b4" stroke="none"/>
<rect x="188" y="0" width="1" height="8" fill="#b4b4b4" stroke="none"/>
<rect x="193" y="0" width="150" height="8" fill="#fff" stroke="none"/>
<rect x="193" y="0" width="1" height="8" fill="#e2e6ee" stroke="none"/>
<path d="M199.5 0 V2.5 H208.5 V0" fill="none" stroke="#000" stroke-width="1"/>
<rect x="334" y="0" width="1.4" height="1" fill="#000" stroke="none"/>
<rect x="343" y="0" width="7" height="9" fill="#f0f0f0" stroke="none"/>
<rect x="345" y="0" width="1" height="7" fill="#555" stroke="none"/>
<rect x="350" y="0" width="158" height="8" fill="#fff" stroke="none"/>
<rect x="500" y="0" width="1.4" height="1" fill="#000" stroke="none"/>
<rect x="511" y="0" width="1" height="7" fill="#555" stroke="none"/>
<rect x="516" y="0" width="123" height="8" fill="#fff" stroke="none"/>
<rect x="631" y="0" width="1.4" height="1" fill="#000" stroke="none"/>
<rect x="642" y="0" width="1" height="7" fill="#555" stroke="none"/>
<rect x="647" y="0" width="100" height="7" fill="#f0f0f0" stroke="none"/>
<rect x="647" y="7" width="100" height="1" fill="#fff" stroke="none"/>
<rect x="747" y="0" width="18" height="8" fill="#fff" stroke="none"/>
<rect x="646" y="0" width="1" height="8" fill="#dcdcdc" stroke="none"/>
<rect x="646" y="8" width="120" height="1" fill="#a8a8a8" stroke="none"/>
<rect x="765" y="0" width="1" height="9" fill="#b0b0b0" stroke="none"/>
<rect x="766" y="0" width="3" height="8" fill="#f8f8f8" stroke="none"/>
<rect x="769" y="0" width="1" height="9" fill="#b0b0b0" stroke="none"/>
<rect x="757" y="0" width="1.4" height="1" fill="#666" stroke="none"/>
<rect x="0" y="9" width="770" height="1" fill="#a9a9a9" stroke="none"/>
<rect x="0" y="8" width="178" height="1" fill="#f4f4f4" stroke="none"/>
<rect x="0" y="10" width="1025" height="1" fill="#ececec" stroke="none"/>
<rect x="770" y="10" width="255" height="1" fill="#f7f7f7" stroke="none"/>
<rect x="0" y="11" width="1025" height="1" fill="#b2b2b2" stroke="none"/>
<rect x="0" y="12" width="1025" height="1" fill="#545454" stroke="none"/>
<text x="213" y="1.9" font-size="12.5" fill="#000" textLength="39.5" lengthAdjust="spacingAndGlyphs" style='font-family:"Liberation Serif",serif;font-weight:normal;filter:grayscale(1)'>ByLayer</text>
<text x="418.7" y="1.9" font-size="12.5" fill="#000" textLength="39.5" lengthAdjust="spacingAndGlyphs" style='font-family:"Liberation Serif",serif;font-weight:normal;filter:grayscale(1)'>ByLayer</text>
<text x="560" y="1.9" font-size="12.5" fill="#000" textLength="39.5" lengthAdjust="spacingAndGlyphs" style='font-family:"Liberation Serif",serif;font-weight:normal;filter:grayscale(1)'>ByLayer</text>
<text x="655" y="1.6" font-size="12" fill="#808080" textLength="36" lengthAdjust="spacingAndGlyphs" font-weight="normal" style="filter:grayscale(1)">随颜色</text></g>
</svg>
</body></html>
